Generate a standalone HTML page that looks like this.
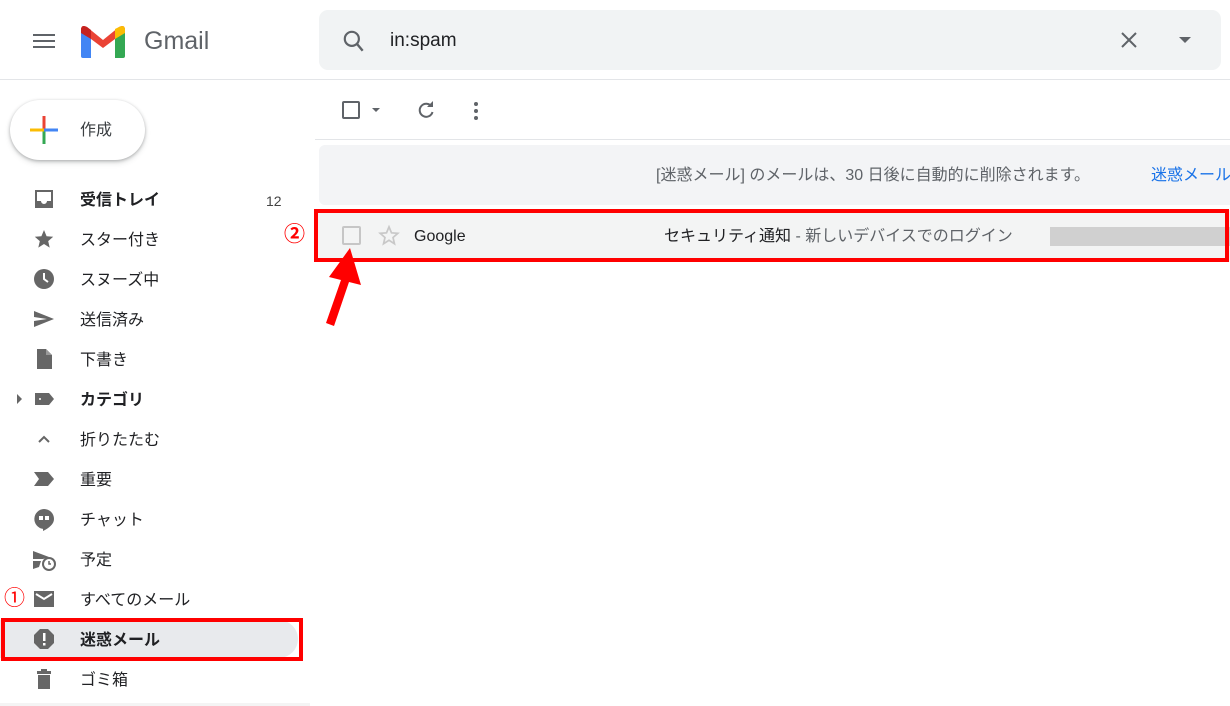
<!DOCTYPE html>
<html><head><meta charset="utf-8"><style>
*{margin:0;padding:0;box-sizing:border-box}
body{width:1230px;height:706px;overflow:hidden;background:#fff;font-family:"Liberation Sans","Noto Sans CJK JP",sans-serif;color:#202124;position:relative}
.a{position:absolute}
.nav{position:absolute;left:0;width:300px;height:40px;font-size:16px;line-height:40px}
.nav .t{position:absolute;left:80px;top:2px;white-space:nowrap}
.nav svg{position:absolute;left:32px;top:8px}
.l{line-height:20px;white-space:nowrap}
</style></head><body>
<div class="a" style="left:0;top:79px;width:1230px;height:1px;background:#e3e5e8"></div>
<div class="a" style="left:33px;top:34px;width:22px;height:2px;background:#5f6368;box-shadow:0 6px 0 #5f6368,0 12px 0 #5f6368"></div>
<svg class="a" style="left:81px;top:25px" width="44" height="33" viewBox="0 0 44 33">
<path d="M0 5 L0 31 Q0 33 2 33 L10 33 L10 14 Z" fill="#4285f4"/>
<path d="M34 14 L34 33 L42 33 Q44 33 44 31 L44 5 Z" fill="#34a853"/>
<path d="M0 5 Q0 -1 6 2 L22 15 L38 2 Q44 -1 44 5 L34 14 L22 23 L10 14 Z" fill="#ea4335"/>
<path d="M34 4 L38 2 Q44 -1 44 5 L44 8 L34 14 Z" fill="#fbbc04"/>
<path d="M0 5 Q0 -1 6 2 L10 5 L10 14 L0 8Z" fill="#c5221f"/>
</svg>
<div class="a l" style="left:144px;top:29px;font-size:25px;line-height:24px;color:#5f6368">Gmail</div>
<div class="a" style="left:319px;top:10px;width:902px;height:60px;background:#f1f3f4;border-radius:9px"></div>
<svg class="a" style="left:341px;top:28px" width="26" height="26" viewBox="0 0 24 24"><circle cx="10" cy="10" r="6.5" fill="none" stroke="#5f6368" stroke-width="2"/><path d="M15 15 L20 21" stroke="#5f6368" stroke-width="2.2"/></svg>
<div class="a l" style="left:390px;top:31px;font-size:19px;color:#202124">in:spam</div>
<svg class="a" style="left:1119px;top:30px" width="20" height="20"><path d="M3 3L17 17M17 3L3 17" stroke="#5f6368" stroke-width="2"/></svg>
<div class="a" style="left:1179px;top:37px;border-left:6px solid transparent;border-right:6px solid transparent;border-top:6px solid #5f6368"></div>
<div class="a" style="left:342px;top:101px;width:18px;height:18px;border:2px solid #5f6368;border-radius:2px"></div>
<div class="a" style="left:372px;top:108px;border-left:4px solid transparent;border-right:4px solid transparent;border-top:4px solid #5f6368"></div>
<svg class="a" style="left:416px;top:100px" width="20" height="20" viewBox="0 0 20 20"><path d="M15.5 6.5 A6.5 6.5 0 1 0 16.5 12" fill="none" stroke="#5f6368" stroke-width="2"/><path d="M11 7 L17 7 L17 1 Z" fill="#5f6368"/></svg>
<div class="a" style="left:474px;top:102px;width:4px;height:4px;border-radius:2px;background:#5f6368;box-shadow:0 7px 0 #5f6368,0 14px 0 #5f6368"></div>
<div class="a" style="left:315px;top:139px;width:915px;height:1px;background:#e3e5e8"></div>
<div class="a" style="left:319px;top:145px;width:911px;height:60px;background:#f3f4f6;border-radius:6px 0 0 6px"></div>
<div class="a l" style="left:656px;top:166px;font-size:16px;color:#5f6368">[迷惑メール] のメールは、30 日後に自動的に削除されます。</div>
<div class="a l" style="left:1151px;top:166px;font-size:16px;color:#1a73e8">迷惑メール</div>
<div class="a" style="left:314px;top:210px;width:916px;height:52px;background:#f3f4f4"></div>
<div class="a" style="left:342px;top:226px;width:19px;height:19px;border:2px solid #c6c6c6;border-radius:2px"></div>
<svg class="a" style="left:377px;top:224px" width="24" height="23" viewBox="0 0 24 24"><path d="M12 3l2.6 6.2 6.6.5-5 4.4 1.5 6.5L12 17l-5.7 3.6 1.5-6.5-5-4.4 6.6-.5z" fill="none" stroke="#c8c8c8" stroke-width="1.8"/></svg>
<div class="a l" style="left:414px;top:227px;font-size:16px">Google</div>
<div class="a l" style="left:664px;top:227px;font-size:16px">セキュリティ通知<span style="color:#5f6368"> - 新しいデバイスでのログイン</span></div>
<div class="a" style="left:1050px;top:227px;width:180px;height:19px;background:#d0d0d0"></div>
<div class="a" style="left:314px;top:209px;width:915px;height:53px;border:4px solid #f00"></div>
<div class="a l" style="left:284px;top:225px;font-size:21px;color:#f00;font-weight:bold">②</div>
<svg class="a" style="left:310px;top:240px" width="60" height="90" viewBox="0 0 60 90"><path d="M40 8 L19 37 L31 40 L16 83 L24 86 L39 42 L51 45 Z" fill="#f00"/></svg>
<div class="a" style="left:10px;top:100px;width:135px;height:60px;border-radius:30px;background:#fff;box-shadow:0 1px 3px rgba(60,64,67,.35),0 3px 6px rgba(60,64,67,.15)"></div>
<svg class="a" style="left:29px;top:115px" width="30" height="30" viewBox="0 0 30 30"><rect x="13.5" y="1" width="3" height="14" fill="#ea4335"/><rect x="13.5" y="15" width="3" height="14" fill="#34a853"/><rect x="1" y="13.5" width="14" height="3" fill="#fbbc04"/><rect x="15" y="13.5" width="14" height="3" fill="#4285f4"/></svg>
<div class="a l" style="left:80px;top:121px;font-size:16px;color:#3c4043">作成</div>
<div class="nav" style="top:179px;font-weight:bold"><svg width="24" height="24" viewBox="0 0 24 24"><path d="M3 3h18v18H3z M5 5v9h4a3 3 0 0 0 6 0h4V5z" fill="#666" fill-rule="evenodd"/></svg><span class="t">受信トレイ</span><span style="position:absolute;left:266px;top:2px;font-weight:normal;font-size:14px;color:#444">12</span></div>
<div class="nav" style="top:219px"><svg width="24" height="24" viewBox="0 0 24 24"><path d="M12 3l2.6 6.2 6.6.5-5 4.4 1.5 6.5L12 17l-5.7 3.6 1.5-6.5-5-4.4 6.6-.5z" fill="#666"/></svg><span class="t">スター付き</span></div>
<div class="nav" style="top:259px"><svg width="24" height="24" viewBox="0 0 24 24"><circle cx="12" cy="12" r="10" fill="#666"/><path d="M12 6v6l4 3" stroke="#fff" stroke-width="2" fill="none"/></svg><span class="t">スヌーズ中</span></div>
<div class="nav" style="top:299px"><svg width="24" height="24" viewBox="0 0 24 24"><path d="M2 4l20 8-20 8v-6l13-2-13-2z" fill="#666"/></svg><span class="t">送信済み</span></div>
<div class="nav" style="top:339px"><svg width="24" height="24" viewBox="0 0 24 24"><path d="M5 2h9l6 6v14H5z" fill="#666"/><path d="M14 2v6h6" fill="#999"/></svg><span class="t">下書き</span></div>
<div class="nav" style="top:379px;font-weight:bold"><div style="position:absolute;left:17px;top:15px;border-top:5px solid transparent;border-bottom:5px solid transparent;border-left:5px solid #666"></div><svg width="24" height="24" viewBox="0 0 24 24"><path d="M3 6h14l5 6-5 6H3z" fill="#666"/><circle cx="8" cy="12" r="1" fill="#fff"/></svg><span class="t">カテゴリ</span></div>
<div class="nav" style="top:419px"><svg width="24" height="24" viewBox="0 0 24 24"><path d="M7 15l5-5 5 5" stroke="#666" stroke-width="2" fill="none"/></svg><span class="t">折りたたむ</span></div>
<div class="nav" style="top:459px"><svg width="24" height="24" viewBox="0 0 24 24"><path d="M2 5h14l6 7-6 7H2l5-7z" fill="#666"/></svg><span class="t">重要</span></div>
<div class="nav" style="top:499px"><svg width="24" height="24" viewBox="0 0 24 24"><path d="M12 2a10 10 0 0 0 -1 19.9V24c6-3 11-7 11-12A10 10 0 0 0 12 2z" fill="#666"/><rect x="7" y="9" width="4" height="4" fill="#fff"/><rect x="13" y="9" width="4" height="4" fill="#fff"/></svg><span class="t">チャット</span></div>
<div class="nav" style="top:539px"><svg width="26" height="26" viewBox="0 0 26 26"><path d="M1 4l16 6-6 2H1z M1 14h8l-2 6-6 2z" fill="#666"/><circle cx="17" cy="17" r="7" fill="#666"/><circle cx="17" cy="17" r="5" fill="#fff"/><path d="M17 14v3h2" stroke="#666" stroke-width="1.5" fill="none"/></svg><span class="t">予定</span></div>
<div class="nav" style="top:579px"><svg width="24" height="24" viewBox="0 0 24 24"><path d="M2 4h20v16H2z" fill="#666"/><path d="M4 7l8 5 8-5" stroke="#fff" stroke-width="2" fill="none"/></svg><span class="t">すべてのメール</span></div>
<div class="a l" style="left:4px;top:589px;font-size:21px;color:#f00">①</div>
<div class="a" style="left:0;top:620px;width:298px;height:38px;background:#e8eaed;border-radius:0 19px 19px 0"></div>
<div class="nav" style="top:619px;font-weight:bold"><svg width="24" height="24" viewBox="0 0 24 24"><path d="M8 2h8l6 6v8l-6 6H8l-6-6V8z" fill="#666"/><rect x="11" y="6" width="2.5" height="8" fill="#fff"/><rect x="11" y="16" width="2.5" height="2.5" fill="#fff"/></svg><span class="t">迷惑メール</span></div>
<div class="a" style="left:1px;top:618px;width:302px;height:43px;border:4px solid #f00"></div>
<div class="nav" style="top:659px"><svg width="24" height="24" viewBox="0 0 24 24"><path d="M5 4h14v3H5z M9 2h6v2H9z M6 8h12v14H6z" fill="#666"/></svg><span class="t">ゴミ箱</span></div>
<div class="a" style="left:0;top:703px;width:310px;height:3px;background:#f4f4f4"></div>
</body></html>
